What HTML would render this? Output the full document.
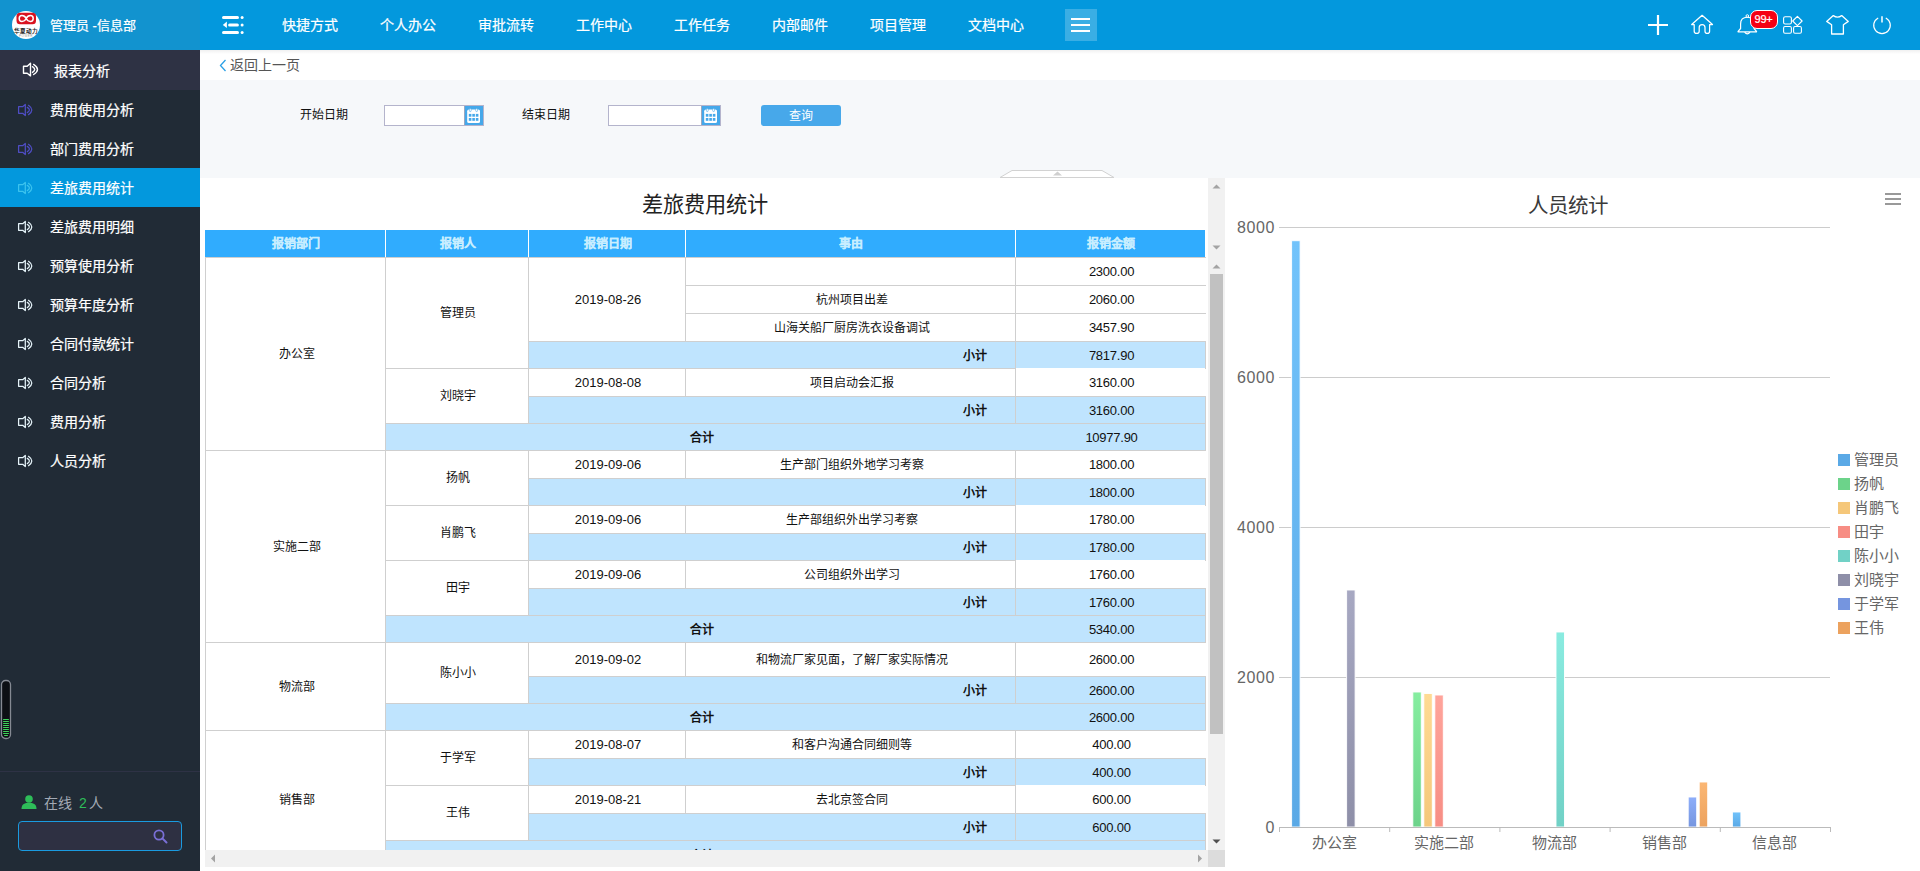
<!DOCTYPE html><html lang="zh-CN"><head><meta charset="utf-8"><title>差旅费用统计</title><style>
*{box-sizing:border-box;margin:0;padding:0}
html,body{width:1920px;height:871px;overflow:hidden;background:#fff}
body{position:relative;font-family:"Liberation Sans",sans-serif;color:#000}
.a{position:absolute}
.ws{-webkit-text-stroke:.22px #fff}
.mi{position:absolute;left:0;width:200px;height:39px;color:#fff;font-size:14px;line-height:39px;white-space:nowrap}
.mi span{position:absolute;left:50px;top:0}
.mi svg{position:absolute;left:18px;top:13px}
.nav{position:absolute;top:0;height:50px;line-height:50px;color:#fff;font-size:14px;white-space:nowrap}
.c{position:absolute;text-align:center;white-space:nowrap;font-size:12px;color:#111}
.n{font-size:13px}
.hl{position:absolute;height:1px;background:#cfcfcf}
.vl{position:absolute;width:1px;background:#cfcfcf}
.bl{position:absolute;background:#c2e5fc}
.th{position:absolute;top:230px;height:27px;line-height:27px;background:#30acfe;color:#c8eeff;font-weight:bold;font-size:12px;text-align:center;-webkit-text-stroke:.2px #c8eeff;padding-top:1px}
.lg{position:absolute;left:1838px;width:12px;height:12px}
.lt{position:absolute;left:1854px;font-size:15px;color:#666;line-height:15px;white-space:nowrap}
</style></head><body>
<div class="a" style="left:0;top:0;width:200px;height:871px;background:#212b36"></div>
<div class="a" style="left:0;top:0;width:200px;height:50px;background:#1293cf"></div>
<svg class="a" style="left:12px;top:11px" width="28" height="28" viewBox="0 0 28 28">
<circle cx="14" cy="14" r="14" fill="#fff"/>
<rect x="4.5" y="1.8" width="19.5" height="11.5" rx="3.5" fill="#d9121f"/>
<path d="M14.2 7.5 C12.2 3.6 7.2 3.6 7.2 7.5 C7.2 11.4 12.2 11.4 14.2 7.5 C16.2 3.6 21.2 3.6 21.2 7.5 C21.2 11.4 16.2 11.4 14.2 7.5Z" fill="none" stroke="#fff" stroke-width="1.5"/>
<text x="14" y="21.5" text-anchor="middle" font-size="5.6" font-weight="bold" fill="#222" font-family="Liberation Sans">华夏动力</text>
<text x="14" y="26" text-anchor="middle" font-size="3" fill="#999" font-family="Liberation Sans" letter-spacing=".5">POWER</text>
</svg>
<div class="a ws" style="left:50px;top:17px;font-size:13px;line-height:18px;color:#fff;white-space:nowrap">管理员 -信息部</div>
<div class="a" style="left:0;top:50px;width:200px;height:40px;background:#2e3244"></div>
<svg class="a" style="left:22px;top:62px" width="20" height="16" viewBox="0 0 20 16"><path d="M1.5 4.2 H5.2 L8.5 1.2 V13.9 L5.2 11.3 H1.5 Z" fill="none" stroke="#ffffff" stroke-width="1.4" stroke-linejoin="round"/><path d="M10.5 4.7 Q14.9 7.55 10.5 10.4" fill="none" stroke="#ffffff" stroke-width="1.4" stroke-linecap="round"/><path d="M11.6 2.4 Q19.4 7.45 11.6 12.5" fill="none" stroke="#ffffff" stroke-width="1.4" stroke-linecap="round"/></svg>
<div class="a ws" style="left:54px;top:62px;font-size:14px;line-height:18px;color:#fff;white-space:nowrap">报表分析</div>
<svg class="a" style="left:17px;top:103px" width="20" height="16" viewBox="0 0 20 16"><path d="M1.6 3.7 H5.7 L8.3 1.4 V12.6 L5.7 10.3 H1.6 Z" fill="none" stroke="#4f4dc4" stroke-width="1.25" stroke-linejoin="round"/><path d="M10.3 4.4 Q14.5 7 10.3 9.6" fill="none" stroke="#4f4dc4" stroke-width="1.25" stroke-linecap="round"/><path d="M11.5 2.3 Q18.1 7 11.5 11.7" fill="none" stroke="#4f4dc4" stroke-width="1.25" stroke-linecap="round"/></svg>
<div style="position:absolute;left:50px;top:101px;font-size:14px;line-height:18px;color:#fff;white-space:nowrap" class="a ws">费用使用分析</div>
<svg class="a" style="left:17px;top:142px" width="20" height="16" viewBox="0 0 20 16"><path d="M1.6 3.7 H5.7 L8.3 1.4 V12.6 L5.7 10.3 H1.6 Z" fill="none" stroke="#4f4dc4" stroke-width="1.25" stroke-linejoin="round"/><path d="M10.3 4.4 Q14.5 7 10.3 9.6" fill="none" stroke="#4f4dc4" stroke-width="1.25" stroke-linecap="round"/><path d="M11.5 2.3 Q18.1 7 11.5 11.7" fill="none" stroke="#4f4dc4" stroke-width="1.25" stroke-linecap="round"/></svg>
<div style="position:absolute;left:50px;top:140px;font-size:14px;line-height:18px;color:#fff;white-space:nowrap" class="a ws">部门费用分析</div>
<div class="a" style="left:0;top:168px;width:200px;height:39px;background:#0398dd"></div>
<svg class="a" style="left:17px;top:181px" width="20" height="16" viewBox="0 0 20 16"><path d="M1.6 3.7 H5.7 L8.3 1.4 V12.6 L5.7 10.3 H1.6 Z" fill="none" stroke="#3cc3ee" stroke-width="1.25" stroke-linejoin="round"/><path d="M10.3 4.4 Q14.5 7 10.3 9.6" fill="none" stroke="#3cc3ee" stroke-width="1.25" stroke-linecap="round"/><path d="M11.5 2.3 Q18.1 7 11.5 11.7" fill="none" stroke="#3cc3ee" stroke-width="1.25" stroke-linecap="round"/></svg>
<div style="position:absolute;left:50px;top:179px;font-size:14px;line-height:18px;color:#fff;white-space:nowrap" class="a ws">差旅费用统计</div>
<svg class="a" style="left:17px;top:220px" width="20" height="16" viewBox="0 0 20 16"><path d="M1.6 3.7 H5.7 L8.3 1.4 V12.6 L5.7 10.3 H1.6 Z" fill="none" stroke="#e6f4fa" stroke-width="1.25" stroke-linejoin="round"/><path d="M10.3 4.4 Q14.5 7 10.3 9.6" fill="none" stroke="#e6f4fa" stroke-width="1.25" stroke-linecap="round"/><path d="M11.5 2.3 Q18.1 7 11.5 11.7" fill="none" stroke="#e6f4fa" stroke-width="1.25" stroke-linecap="round"/></svg>
<div style="position:absolute;left:50px;top:218px;font-size:14px;line-height:18px;color:#fff;white-space:nowrap" class="a ws">差旅费用明细</div>
<svg class="a" style="left:17px;top:259px" width="20" height="16" viewBox="0 0 20 16"><path d="M1.6 3.7 H5.7 L8.3 1.4 V12.6 L5.7 10.3 H1.6 Z" fill="none" stroke="#e6f4fa" stroke-width="1.25" stroke-linejoin="round"/><path d="M10.3 4.4 Q14.5 7 10.3 9.6" fill="none" stroke="#e6f4fa" stroke-width="1.25" stroke-linecap="round"/><path d="M11.5 2.3 Q18.1 7 11.5 11.7" fill="none" stroke="#e6f4fa" stroke-width="1.25" stroke-linecap="round"/></svg>
<div style="position:absolute;left:50px;top:257px;font-size:14px;line-height:18px;color:#fff;white-space:nowrap" class="a ws">预算使用分析</div>
<svg class="a" style="left:17px;top:298px" width="20" height="16" viewBox="0 0 20 16"><path d="M1.6 3.7 H5.7 L8.3 1.4 V12.6 L5.7 10.3 H1.6 Z" fill="none" stroke="#e6f4fa" stroke-width="1.25" stroke-linejoin="round"/><path d="M10.3 4.4 Q14.5 7 10.3 9.6" fill="none" stroke="#e6f4fa" stroke-width="1.25" stroke-linecap="round"/><path d="M11.5 2.3 Q18.1 7 11.5 11.7" fill="none" stroke="#e6f4fa" stroke-width="1.25" stroke-linecap="round"/></svg>
<div style="position:absolute;left:50px;top:296px;font-size:14px;line-height:18px;color:#fff;white-space:nowrap" class="a ws">预算年度分析</div>
<svg class="a" style="left:17px;top:337px" width="20" height="16" viewBox="0 0 20 16"><path d="M1.6 3.7 H5.7 L8.3 1.4 V12.6 L5.7 10.3 H1.6 Z" fill="none" stroke="#e6f4fa" stroke-width="1.25" stroke-linejoin="round"/><path d="M10.3 4.4 Q14.5 7 10.3 9.6" fill="none" stroke="#e6f4fa" stroke-width="1.25" stroke-linecap="round"/><path d="M11.5 2.3 Q18.1 7 11.5 11.7" fill="none" stroke="#e6f4fa" stroke-width="1.25" stroke-linecap="round"/></svg>
<div style="position:absolute;left:50px;top:335px;font-size:14px;line-height:18px;color:#fff;white-space:nowrap" class="a ws">合同付款统计</div>
<svg class="a" style="left:17px;top:376px" width="20" height="16" viewBox="0 0 20 16"><path d="M1.6 3.7 H5.7 L8.3 1.4 V12.6 L5.7 10.3 H1.6 Z" fill="none" stroke="#e6f4fa" stroke-width="1.25" stroke-linejoin="round"/><path d="M10.3 4.4 Q14.5 7 10.3 9.6" fill="none" stroke="#e6f4fa" stroke-width="1.25" stroke-linecap="round"/><path d="M11.5 2.3 Q18.1 7 11.5 11.7" fill="none" stroke="#e6f4fa" stroke-width="1.25" stroke-linecap="round"/></svg>
<div style="position:absolute;left:50px;top:374px;font-size:14px;line-height:18px;color:#fff;white-space:nowrap" class="a ws">合同分析</div>
<svg class="a" style="left:17px;top:415px" width="20" height="16" viewBox="0 0 20 16"><path d="M1.6 3.7 H5.7 L8.3 1.4 V12.6 L5.7 10.3 H1.6 Z" fill="none" stroke="#e6f4fa" stroke-width="1.25" stroke-linejoin="round"/><path d="M10.3 4.4 Q14.5 7 10.3 9.6" fill="none" stroke="#e6f4fa" stroke-width="1.25" stroke-linecap="round"/><path d="M11.5 2.3 Q18.1 7 11.5 11.7" fill="none" stroke="#e6f4fa" stroke-width="1.25" stroke-linecap="round"/></svg>
<div style="position:absolute;left:50px;top:413px;font-size:14px;line-height:18px;color:#fff;white-space:nowrap" class="a ws">费用分析</div>
<svg class="a" style="left:17px;top:454px" width="20" height="16" viewBox="0 0 20 16"><path d="M1.6 3.7 H5.7 L8.3 1.4 V12.6 L5.7 10.3 H1.6 Z" fill="none" stroke="#e6f4fa" stroke-width="1.25" stroke-linejoin="round"/><path d="M10.3 4.4 Q14.5 7 10.3 9.6" fill="none" stroke="#e6f4fa" stroke-width="1.25" stroke-linecap="round"/><path d="M11.5 2.3 Q18.1 7 11.5 11.7" fill="none" stroke="#e6f4fa" stroke-width="1.25" stroke-linecap="round"/></svg>
<div style="position:absolute;left:50px;top:452px;font-size:14px;line-height:18px;color:#fff;white-space:nowrap" class="a ws">人员分析</div>
<svg class="a" style="left:0;top:679px" width="13" height="61" viewBox="0 0 13 61">
<rect x="1.5" y="1.5" width="9" height="58" rx="4" fill="#0c0f14" stroke="#858a93" stroke-width="1.3"/>
<rect x="3" y="40" width="6" height="1.1" rx=".5" fill="#3fd45a"/><rect x="3" y="42" width="6" height="1.1" rx=".5" fill="#3fd45a"/><rect x="3" y="44" width="6" height="1.1" rx=".5" fill="#3fd45a"/><rect x="3" y="46" width="6" height="1.1" rx=".5" fill="#3fd45a"/><rect x="3" y="48" width="6" height="1.1" rx=".5" fill="#3fd45a"/><rect x="3" y="50" width="6" height="1.1" rx=".5" fill="#3fd45a"/><rect x="3" y="52" width="6" height="1.1" rx=".5" fill="#3fd45a"/><rect x="3" y="54" width="6" height="1.1" rx=".5" fill="#3fd45a"/><rect x="4" y="56" width="4" height="1.1" rx=".5" fill="#3fd45a"/></svg>
<div class="a" style="left:0;top:771px;width:200px;height:1px;background:#2e3245"></div>
<svg class="a" style="left:21px;top:795px" width="16" height="14" viewBox="0 0 16 14"><circle cx="8" cy="4" r="3.8" fill="#2ebd59"/><path d="M0.5 14 C0.5 9 4 7.8 8 7.8 C12 7.8 15.5 9 15.5 14Z" fill="#2ebd59"/></svg>
<div class="a" style="left:44px;top:794px;font-size:14px;line-height:18px;color:#a3aab5;white-space:nowrap">在线<span style="color:#2ebd59;margin-left:7px;margin-right:2px">2</span>人</div>
<div class="a" style="left:18px;top:821px;width:164px;height:30px;border:1px solid #1a9be0;border-radius:4px;background:#2e3042"></div>
<svg class="a" style="left:153px;top:829px" width="15" height="15" viewBox="0 0 15 15"><circle cx="6" cy="6" r="4.6" fill="none" stroke="#7a6fd6" stroke-width="1.8"/><path d="M9.4 9.4 L13.5 13.5" stroke="#7a6fd6" stroke-width="2" stroke-linecap="round"/></svg>
<div class="a" style="left:200px;top:0;width:1720px;height:50px;background:#0398dd"></div>
<svg class="a" style="left:221px;top:15px" width="25" height="20" viewBox="0 0 25 20">
<rect x="1" y="1" width="17" height="3" rx="1.5" fill="#fff"/><circle cx="21.1" cy="2.5" r="1.5" fill="#fff"/>
<rect x="7.1" y="8.5" width="10.8" height="3" rx="1.5" fill="#fff"/><circle cx="21.1" cy="10" r="1.5" fill="#fff"/><path d="M1.8 9.9 L5.9 6.6 V13.1Z" fill="#fff"/>
<rect x="1" y="16" width="17" height="3" rx="1.5" fill="#fff"/><circle cx="21.1" cy="17.5" r="1.5" fill="#fff"/>
</svg>
<div style="position:absolute;left:282px;top:16px;font-size:14px;line-height:18px;color:#fff;white-space:nowrap" class="a ws">快捷方式</div>
<div style="position:absolute;left:380px;top:16px;font-size:14px;line-height:18px;color:#fff;white-space:nowrap" class="a ws">个人办公</div>
<div style="position:absolute;left:478px;top:16px;font-size:14px;line-height:18px;color:#fff;white-space:nowrap" class="a ws">审批流转</div>
<div style="position:absolute;left:576px;top:16px;font-size:14px;line-height:18px;color:#fff;white-space:nowrap" class="a ws">工作中心</div>
<div style="position:absolute;left:674px;top:16px;font-size:14px;line-height:18px;color:#fff;white-space:nowrap" class="a ws">工作任务</div>
<div style="position:absolute;left:772px;top:16px;font-size:14px;line-height:18px;color:#fff;white-space:nowrap" class="a ws">内部邮件</div>
<div style="position:absolute;left:870px;top:16px;font-size:14px;line-height:18px;color:#fff;white-space:nowrap" class="a ws">项目管理</div>
<div style="position:absolute;left:968px;top:16px;font-size:14px;line-height:18px;color:#fff;white-space:nowrap" class="a ws">文档中心</div>
<div class="a" style="left:1065px;top:9px;width:32px;height:32px;background:rgba(255,255,255,.22)"></div>
<div class="a" style="left:1071px;top:18px;width:19px;height:2px;background:#fff"></div>
<div class="a" style="left:1071px;top:24px;width:19px;height:2px;background:#fff"></div>
<div class="a" style="left:1071px;top:30px;width:19px;height:2px;background:#fff"></div>
<svg class="a" style="left:1646px;top:13px" width="24" height="24" viewBox="0 0 24 24"><path d="M12 2 V22 M2 12 H22" stroke="#fff" stroke-width="2.2"/></svg>
<svg class="a" style="left:1690px;top:14px" width="24" height="22" viewBox="0 0 24 22"><path d="M12.1 1.3 L1.7 10.5 H4.2 V17.2 Q4.2 19.4 6.7 19.4 Q9.2 19.4 9.2 17.2 V13.6 A2.9 2.9 0 0 1 15 13.6 V17.2 Q15 19.4 17.3 19.4 Q19.6 19.4 19.6 17.2 V10.5 H22.5 Z" fill="none" stroke="#fff" stroke-width="1.25" stroke-linejoin="round"/></svg>
<svg class="a" style="left:1736px;top:13px" width="24" height="24" viewBox="0 0 24 24"><path d="M4.6 15.5 V11 Q4.6 4.25 11.3 4.25 Q18 4.25 18 11 V15.5 L20.5 18.3 Q20.8 18.9 20 18.9 H2.6 Q1.8 18.9 2.1 18.3 Z" fill="none" stroke="#fff" stroke-width="1.2" stroke-linejoin="round"/><path d="M8.6 19.2 Q11.3 22.6 14 19.2" fill="none" stroke="#fff" stroke-width="1.2"/><circle cx="11.3" cy="3" r="1.3" fill="none" stroke="#fff" stroke-width="1"/></svg>
<div class="a" style="left:1749.5px;top:10px;width:28px;height:19px;border-radius:7px;background:#f50014;border:1.7px solid #fff;color:#fff;font-size:11px;line-height:17px;text-align:center;letter-spacing:-.2px;-webkit-text-stroke:.2px #fff">99+</div>
<svg class="a" style="left:1782px;top:15px" width="22" height="21" viewBox="0 0 22 21"><rect x="1.6" y="1.7" width="7.8" height="7.3" rx="1.6" fill="none" stroke="#fff" stroke-width="1.1"/><path d="M15.4 1.3 L20.1 6 L15.4 10.7 L10.7 6 Z" fill="none" stroke="#fff" stroke-width="1.15" stroke-linejoin="round"/><rect x="1.6" y="11.5" width="7.8" height="6.7" rx="1.4" fill="none" stroke="#fff" stroke-width="1.1"/><rect x="11.6" y="11.5" width="7.8" height="6.7" rx="1.4" fill="none" stroke="#fff" stroke-width="1.1"/></svg>
<svg class="a" style="left:1825px;top:14px" width="25" height="22" viewBox="0 0 25 22"><path d="M8.3 1.6 Q12.5 4.6 16.7 1.6 L23.3 7.4 L18.4 10.8 V20 H6.6 V10.8 L1.7 7.4 Z" fill="none" stroke="#fff" stroke-width="1.3" stroke-linejoin="round"/></svg>
<svg class="a" style="left:1871px;top:14px" width="22" height="22" viewBox="0 0 22 22"><path d="M6.8 4.2 A8.3 8.3 0 1 0 15.2 4.2" fill="none" stroke="#fff" stroke-width="1.2" stroke-linecap="round"/><path d="M11 2.2 V8.4" stroke="#fff" stroke-width="1.5"/></svg>
<svg class="a" style="left:219px;top:59px" width="8" height="13" viewBox="0 0 8 13"><path d="M6.5 1 L1.5 6.5 L6.5 12" fill="none" stroke="#2aa0e6" stroke-width="1.3"/></svg>
<div class="a" style="left:230px;top:57px;font-size:14px;line-height:16px;color:#555;white-space:nowrap">返回上一页</div>
<div class="a" style="left:200px;top:80px;width:1720px;height:98px;background:#f6f8fa"></div>
<div class="a" style="left:300px;top:107px;font-size:12px;line-height:16px;color:#111;white-space:nowrap">开始日期</div>
<div class="a" style="left:522px;top:107px;font-size:12px;line-height:16px;color:#111;white-space:nowrap">结束日期</div>
<div class="a" style="left:384px;top:105px;width:100px;height:21px;border:1px solid #b4b4cc;background:#fff"></div><div class="a" style="left:464px;top:106px;width:19px;height:19px;background:#45a8ea;border-left:1px solid #9aa7c0"></div><svg class="a" style="left:466px;top:108px" width="16" height="16" viewBox="0 0 16 16"><rect x="1.2" y="1.6" width="12.8" height="13.4" rx="1.6" fill="#fff"/><rect x="2.8" y="5.9" width="2.6" height="2.8" fill="#45a8ea"/><rect x="6.3" y="5.9" width="2.6" height="2.8" fill="#45a8ea"/><rect x="9.8" y="5.9" width="2.6" height="2.8" fill="#45a8ea"/><rect x="2.8" y="10" width="2.6" height="2.8" fill="#45a8ea"/><rect x="6.3" y="10" width="2.6" height="2.8" fill="#45a8ea"/><rect x="9.8" y="10" width="2.6" height="2.8" fill="#45a8ea"/><rect x="3.4" y="0.6" width="1.8" height="3" rx=".9" fill="#fff" stroke="#45a8ea" stroke-width=".6"/><rect x="9.7" y="0.6" width="1.8" height="3" rx=".9" fill="#fff" stroke="#45a8ea" stroke-width=".6"/></svg>
<div class="a" style="left:608px;top:105px;width:113px;height:21px;border:1px solid #b4b4cc;background:#fff"></div><div class="a" style="left:701px;top:106px;width:19px;height:19px;background:#45a8ea;border-left:1px solid #9aa7c0"></div><svg class="a" style="left:703px;top:108px" width="16" height="16" viewBox="0 0 16 16"><rect x="1.2" y="1.6" width="12.8" height="13.4" rx="1.6" fill="#fff"/><rect x="2.8" y="5.9" width="2.6" height="2.8" fill="#45a8ea"/><rect x="6.3" y="5.9" width="2.6" height="2.8" fill="#45a8ea"/><rect x="9.8" y="5.9" width="2.6" height="2.8" fill="#45a8ea"/><rect x="2.8" y="10" width="2.6" height="2.8" fill="#45a8ea"/><rect x="6.3" y="10" width="2.6" height="2.8" fill="#45a8ea"/><rect x="9.8" y="10" width="2.6" height="2.8" fill="#45a8ea"/><rect x="3.4" y="0.6" width="1.8" height="3" rx=".9" fill="#fff" stroke="#45a8ea" stroke-width=".6"/><rect x="9.7" y="0.6" width="1.8" height="3" rx=".9" fill="#fff" stroke="#45a8ea" stroke-width=".6"/></svg>
<div class="a" style="left:761px;top:105px;width:80px;height:21px;border-radius:3px;background:#47a8ea;color:#fff;font-size:12px;line-height:23px;text-align:center">查询</div>
<svg class="a" style="left:999px;top:169px" width="117" height="10" viewBox="0 0 117 10"><path d="M1 8.5 L13 1.5 L103 1.5 L115 8.5 Z" fill="#fff" stroke="#d2d2d2" stroke-width="1"/><path d="M54 6.5 L58.5 2.5 L63 6.5Z" fill="#cfcfcf"/></svg>
<div class="a" style="left:200px;top:178px;width:1008px;height:693px;background:#fff"></div>
<div class="a" style="left:642px;top:193px;font-size:21.2px;line-height:24px;color:#222;white-space:nowrap">差旅费用统计</div>
<div class="th" style="left:205px;width:180px;padding-left:1.5px">报销部门</div>
<div class="th" style="left:386px;width:142px;padding-left:1.5px">报销人</div>
<div class="th" style="left:529px;width:156px;padding-left:1.5px">报销日期</div>
<div class="th" style="left:686px;width:329px;padding-left:1.5px">事由</div>
<div class="th" style="left:1016px;width:189px;padding-left:1.5px">报销金额</div>
<div class="hl" style="left:205px;top:257px;width:181px"></div><div class="vl" style="left:205px;top:257px;height:194px"></div><div class="c" style="left:206.5px;width:180px;top:345.0px;line-height:18px;font-size:12px;font-weight:normal;letter-spacing:0px">办公室</div>
<div class="hl" style="left:205px;top:450px;width:181px"></div><div class="vl" style="left:205px;top:450px;height:193px"></div><div class="c" style="left:206.5px;width:180px;top:537.5px;line-height:18px;font-size:12px;font-weight:normal;letter-spacing:0px">实施二部</div>
<div class="hl" style="left:205px;top:642px;width:181px"></div><div class="vl" style="left:205px;top:642px;height:89px"></div><div class="c" style="left:206.5px;width:180px;top:677.5px;line-height:18px;font-size:12px;font-weight:normal;letter-spacing:0px">物流部</div>
<div class="hl" style="left:205px;top:730px;width:181px"></div><div class="vl" style="left:205px;top:730px;height:139px"></div><div class="c" style="left:206.5px;width:180px;top:790.5px;line-height:18px;font-size:12px;font-weight:normal;letter-spacing:0px">销售部</div>
<div class="hl" style="left:385px;top:257px;width:144px"></div><div class="vl" style="left:385px;top:257px;height:112px"></div><div class="c" style="left:386.5px;width:143px;top:304.0px;line-height:18px;font-size:12px;font-weight:normal;letter-spacing:0px">管理员</div>
<div class="hl" style="left:385px;top:368px;width:144px"></div><div class="vl" style="left:385px;top:368px;height:56px"></div><div class="c" style="left:386.5px;width:143px;top:387.0px;line-height:18px;font-size:12px;font-weight:normal;letter-spacing:0px">刘晓宇</div>
<div class="hl" style="left:385px;top:450px;width:144px"></div><div class="vl" style="left:385px;top:450px;height:56px"></div><div class="c" style="left:386.5px;width:143px;top:469.0px;line-height:18px;font-size:12px;font-weight:normal;letter-spacing:0px">扬帆</div>
<div class="hl" style="left:385px;top:505px;width:144px"></div><div class="vl" style="left:385px;top:505px;height:56px"></div><div class="c" style="left:386.5px;width:143px;top:524.0px;line-height:18px;font-size:12px;font-weight:normal;letter-spacing:0px">肖鹏飞</div>
<div class="hl" style="left:385px;top:560px;width:144px"></div><div class="vl" style="left:385px;top:560px;height:56px"></div><div class="c" style="left:386.5px;width:143px;top:579.0px;line-height:18px;font-size:12px;font-weight:normal;letter-spacing:0px">田宇</div>
<div class="hl" style="left:385px;top:642px;width:144px"></div><div class="vl" style="left:385px;top:642px;height:62px"></div><div class="c" style="left:386.5px;width:143px;top:664.0px;line-height:18px;font-size:12px;font-weight:normal;letter-spacing:0px">陈小小</div>
<div class="hl" style="left:385px;top:730px;width:144px"></div><div class="vl" style="left:385px;top:730px;height:56px"></div><div class="c" style="left:386.5px;width:143px;top:749.0px;line-height:18px;font-size:12px;font-weight:normal;letter-spacing:0px">于学军</div>
<div class="hl" style="left:385px;top:785px;width:144px"></div><div class="vl" style="left:385px;top:785px;height:56px"></div><div class="c" style="left:386.5px;width:143px;top:804.0px;line-height:18px;font-size:12px;font-weight:normal;letter-spacing:0px">王伟</div>
<div class="hl" style="left:528px;top:257px;width:158px"></div><div class="vl" style="left:528px;top:257px;height:85px"></div><div class="c" style="left:529.5px;width:157px;top:290.5px;line-height:18px;font-size:13px;font-weight:normal;letter-spacing:0px">2019-08-26</div>
<div class="hl" style="left:528px;top:368px;width:158px"></div><div class="vl" style="left:528px;top:368px;height:29px"></div><div class="c" style="left:529.5px;width:157px;top:373.5px;line-height:18px;font-size:13px;font-weight:normal;letter-spacing:0px">2019-08-08</div>
<div class="hl" style="left:528px;top:450px;width:158px"></div><div class="vl" style="left:528px;top:450px;height:29px"></div><div class="c" style="left:529.5px;width:157px;top:455.5px;line-height:18px;font-size:13px;font-weight:normal;letter-spacing:0px">2019-09-06</div>
<div class="hl" style="left:528px;top:505px;width:158px"></div><div class="vl" style="left:528px;top:505px;height:29px"></div><div class="c" style="left:529.5px;width:157px;top:510.5px;line-height:18px;font-size:13px;font-weight:normal;letter-spacing:0px">2019-09-06</div>
<div class="hl" style="left:528px;top:560px;width:158px"></div><div class="vl" style="left:528px;top:560px;height:29px"></div><div class="c" style="left:529.5px;width:157px;top:565.5px;line-height:18px;font-size:13px;font-weight:normal;letter-spacing:0px">2019-09-06</div>
<div class="hl" style="left:528px;top:642px;width:158px"></div><div class="vl" style="left:528px;top:642px;height:35px"></div><div class="c" style="left:529.5px;width:157px;top:650.5px;line-height:18px;font-size:13px;font-weight:normal;letter-spacing:0px">2019-09-02</div>
<div class="hl" style="left:528px;top:730px;width:158px"></div><div class="vl" style="left:528px;top:730px;height:29px"></div><div class="c" style="left:529.5px;width:157px;top:735.5px;line-height:18px;font-size:13px;font-weight:normal;letter-spacing:0px">2019-08-07</div>
<div class="hl" style="left:528px;top:785px;width:158px"></div><div class="vl" style="left:528px;top:785px;height:29px"></div><div class="c" style="left:529.5px;width:157px;top:790.5px;line-height:18px;font-size:13px;font-weight:normal;letter-spacing:0px">2019-08-21</div>
<div class="hl" style="left:685px;top:257px;width:331px"></div><div class="vl" style="left:685px;top:257px;height:29px"></div>
<div class="hl" style="left:1015px;top:257px;width:191px"></div><div class="vl" style="left:1015px;top:257px;height:29px"></div><div class="c" style="left:1016.5px;width:190px;top:262.5px;line-height:18px;font-size:13px;font-weight:normal;letter-spacing:-0.25px">2300.00</div>
<div class="hl" style="left:685px;top:285px;width:331px"></div><div class="vl" style="left:685px;top:285px;height:29px"></div><div class="c" style="left:686.5px;width:330px;top:290.5px;line-height:18px;font-size:12px;font-weight:normal;letter-spacing:0px">杭州项目出差</div>
<div class="hl" style="left:1015px;top:285px;width:191px"></div><div class="vl" style="left:1015px;top:285px;height:29px"></div><div class="c" style="left:1016.5px;width:190px;top:290.5px;line-height:18px;font-size:13px;font-weight:normal;letter-spacing:-0.25px">2060.00</div>
<div class="hl" style="left:685px;top:313px;width:331px"></div><div class="vl" style="left:685px;top:313px;height:29px"></div><div class="c" style="left:686.5px;width:330px;top:318.5px;line-height:18px;font-size:12px;font-weight:normal;letter-spacing:0px">山海关船厂厨房洗衣设备调试</div>
<div class="hl" style="left:1015px;top:313px;width:191px"></div><div class="vl" style="left:1015px;top:313px;height:29px"></div><div class="c" style="left:1016.5px;width:190px;top:318.5px;line-height:18px;font-size:13px;font-weight:normal;letter-spacing:-0.25px">3457.90</div>
<div class="hl" style="left:685px;top:368px;width:331px"></div><div class="vl" style="left:685px;top:368px;height:29px"></div><div class="c" style="left:686.5px;width:330px;top:373.5px;line-height:18px;font-size:12px;font-weight:normal;letter-spacing:0px">项目启动会汇报</div>
<div class="hl" style="left:1015px;top:368px;width:191px"></div><div class="vl" style="left:1015px;top:368px;height:29px"></div><div class="c" style="left:1016.5px;width:190px;top:373.5px;line-height:18px;font-size:13px;font-weight:normal;letter-spacing:-0.25px">3160.00</div>
<div class="hl" style="left:685px;top:450px;width:331px"></div><div class="vl" style="left:685px;top:450px;height:29px"></div><div class="c" style="left:686.5px;width:330px;top:455.5px;line-height:18px;font-size:12px;font-weight:normal;letter-spacing:0px">生产部门组织外地学习考察</div>
<div class="hl" style="left:1015px;top:450px;width:191px"></div><div class="vl" style="left:1015px;top:450px;height:29px"></div><div class="c" style="left:1016.5px;width:190px;top:455.5px;line-height:18px;font-size:13px;font-weight:normal;letter-spacing:-0.25px">1800.00</div>
<div class="hl" style="left:685px;top:505px;width:331px"></div><div class="vl" style="left:685px;top:505px;height:29px"></div><div class="c" style="left:686.5px;width:330px;top:510.5px;line-height:18px;font-size:12px;font-weight:normal;letter-spacing:0px">生产部组织外出学习考察</div>
<div class="hl" style="left:1015px;top:505px;width:191px"></div><div class="vl" style="left:1015px;top:505px;height:29px"></div><div class="c" style="left:1016.5px;width:190px;top:510.5px;line-height:18px;font-size:13px;font-weight:normal;letter-spacing:-0.25px">1780.00</div>
<div class="hl" style="left:685px;top:560px;width:331px"></div><div class="vl" style="left:685px;top:560px;height:29px"></div><div class="c" style="left:686.5px;width:330px;top:565.5px;line-height:18px;font-size:12px;font-weight:normal;letter-spacing:0px">公司组织外出学习</div>
<div class="hl" style="left:1015px;top:560px;width:191px"></div><div class="vl" style="left:1015px;top:560px;height:29px"></div><div class="c" style="left:1016.5px;width:190px;top:565.5px;line-height:18px;font-size:13px;font-weight:normal;letter-spacing:-0.25px">1760.00</div>
<div class="hl" style="left:685px;top:642px;width:331px"></div><div class="vl" style="left:685px;top:642px;height:35px"></div><div class="c" style="left:686.5px;width:330px;top:650.5px;line-height:18px;font-size:12px;font-weight:normal;letter-spacing:0px">和物流厂家见面，了解厂家实际情况</div>
<div class="hl" style="left:1015px;top:642px;width:191px"></div><div class="vl" style="left:1015px;top:642px;height:35px"></div><div class="c" style="left:1016.5px;width:190px;top:650.5px;line-height:18px;font-size:13px;font-weight:normal;letter-spacing:-0.25px">2600.00</div>
<div class="hl" style="left:685px;top:730px;width:331px"></div><div class="vl" style="left:685px;top:730px;height:29px"></div><div class="c" style="left:686.5px;width:330px;top:735.5px;line-height:18px;font-size:12px;font-weight:normal;letter-spacing:0px">和客户沟通合同细则等</div>
<div class="hl" style="left:1015px;top:730px;width:191px"></div><div class="vl" style="left:1015px;top:730px;height:29px"></div><div class="c" style="left:1016.5px;width:190px;top:735.5px;line-height:18px;font-size:13px;font-weight:normal;letter-spacing:-0.25px">400.00</div>
<div class="hl" style="left:685px;top:785px;width:331px"></div><div class="vl" style="left:685px;top:785px;height:29px"></div><div class="c" style="left:686.5px;width:330px;top:790.5px;line-height:18px;font-size:12px;font-weight:normal;letter-spacing:0px">去北京签合同</div>
<div class="hl" style="left:1015px;top:785px;width:191px"></div><div class="vl" style="left:1015px;top:785px;height:29px"></div><div class="c" style="left:1016.5px;width:190px;top:790.5px;line-height:18px;font-size:13px;font-weight:normal;letter-spacing:-0.25px">600.00</div>
<div class="a" style="left:528px;top:341px;width:487px;height:27px;background:#bfe4fe"></div><div class="hl" style="left:528px;top:341px;width:488px"></div><div class="vl" style="left:528px;top:341px;height:28px"></div><div class="c" style="left:529.5px;width:457px;top:346.5px;line-height:18px;font-size:12px;font-weight:bold;text-align:right">小计</div>
<div class="a" style="left:1015px;top:341px;width:190px;height:27px;background:#bfe4fe"></div><div class="hl" style="left:1015px;top:341px;width:191px"></div><div class="vl" style="left:1015px;top:341px;height:28px"></div><div class="vl" style="left:1205px;top:341px;height:28px"></div><div class="c" style="left:1016.5px;width:190px;top:346.5px;line-height:18px;font-size:13px;font-weight:normal;letter-spacing:-0.25px">7817.90</div>
<div class="a" style="left:528px;top:396px;width:487px;height:27px;background:#bfe4fe"></div><div class="hl" style="left:528px;top:396px;width:488px"></div><div class="vl" style="left:528px;top:396px;height:28px"></div><div class="c" style="left:529.5px;width:457px;top:401.5px;line-height:18px;font-size:12px;font-weight:bold;text-align:right">小计</div>
<div class="a" style="left:1015px;top:396px;width:190px;height:27px;background:#bfe4fe"></div><div class="hl" style="left:1015px;top:396px;width:191px"></div><div class="vl" style="left:1015px;top:396px;height:28px"></div><div class="vl" style="left:1205px;top:396px;height:28px"></div><div class="c" style="left:1016.5px;width:190px;top:401.5px;line-height:18px;font-size:13px;font-weight:normal;letter-spacing:-0.25px">3160.00</div>
<div class="a" style="left:528px;top:478px;width:487px;height:27px;background:#bfe4fe"></div><div class="hl" style="left:528px;top:478px;width:488px"></div><div class="vl" style="left:528px;top:478px;height:28px"></div><div class="c" style="left:529.5px;width:457px;top:483.5px;line-height:18px;font-size:12px;font-weight:bold;text-align:right">小计</div>
<div class="a" style="left:1015px;top:478px;width:190px;height:27px;background:#bfe4fe"></div><div class="hl" style="left:1015px;top:478px;width:191px"></div><div class="vl" style="left:1015px;top:478px;height:28px"></div><div class="vl" style="left:1205px;top:478px;height:28px"></div><div class="c" style="left:1016.5px;width:190px;top:483.5px;line-height:18px;font-size:13px;font-weight:normal;letter-spacing:-0.25px">1800.00</div>
<div class="a" style="left:528px;top:533px;width:487px;height:27px;background:#bfe4fe"></div><div class="hl" style="left:528px;top:533px;width:488px"></div><div class="vl" style="left:528px;top:533px;height:28px"></div><div class="c" style="left:529.5px;width:457px;top:538.5px;line-height:18px;font-size:12px;font-weight:bold;text-align:right">小计</div>
<div class="a" style="left:1015px;top:533px;width:190px;height:27px;background:#bfe4fe"></div><div class="hl" style="left:1015px;top:533px;width:191px"></div><div class="vl" style="left:1015px;top:533px;height:28px"></div><div class="vl" style="left:1205px;top:533px;height:28px"></div><div class="c" style="left:1016.5px;width:190px;top:538.5px;line-height:18px;font-size:13px;font-weight:normal;letter-spacing:-0.25px">1780.00</div>
<div class="a" style="left:528px;top:588px;width:487px;height:27px;background:#bfe4fe"></div><div class="hl" style="left:528px;top:588px;width:488px"></div><div class="vl" style="left:528px;top:588px;height:28px"></div><div class="c" style="left:529.5px;width:457px;top:593.5px;line-height:18px;font-size:12px;font-weight:bold;text-align:right">小计</div>
<div class="a" style="left:1015px;top:588px;width:190px;height:27px;background:#bfe4fe"></div><div class="hl" style="left:1015px;top:588px;width:191px"></div><div class="vl" style="left:1015px;top:588px;height:28px"></div><div class="vl" style="left:1205px;top:588px;height:28px"></div><div class="c" style="left:1016.5px;width:190px;top:593.5px;line-height:18px;font-size:13px;font-weight:normal;letter-spacing:-0.25px">1760.00</div>
<div class="a" style="left:528px;top:676px;width:487px;height:27px;background:#bfe4fe"></div><div class="hl" style="left:528px;top:676px;width:488px"></div><div class="vl" style="left:528px;top:676px;height:28px"></div><div class="c" style="left:529.5px;width:457px;top:681.5px;line-height:18px;font-size:12px;font-weight:bold;text-align:right">小计</div>
<div class="a" style="left:1015px;top:676px;width:190px;height:27px;background:#bfe4fe"></div><div class="hl" style="left:1015px;top:676px;width:191px"></div><div class="vl" style="left:1015px;top:676px;height:28px"></div><div class="vl" style="left:1205px;top:676px;height:28px"></div><div class="c" style="left:1016.5px;width:190px;top:681.5px;line-height:18px;font-size:13px;font-weight:normal;letter-spacing:-0.25px">2600.00</div>
<div class="a" style="left:528px;top:758px;width:487px;height:27px;background:#bfe4fe"></div><div class="hl" style="left:528px;top:758px;width:488px"></div><div class="vl" style="left:528px;top:758px;height:28px"></div><div class="c" style="left:529.5px;width:457px;top:763.5px;line-height:18px;font-size:12px;font-weight:bold;text-align:right">小计</div>
<div class="a" style="left:1015px;top:758px;width:190px;height:27px;background:#bfe4fe"></div><div class="hl" style="left:1015px;top:758px;width:191px"></div><div class="vl" style="left:1015px;top:758px;height:28px"></div><div class="vl" style="left:1205px;top:758px;height:28px"></div><div class="c" style="left:1016.5px;width:190px;top:763.5px;line-height:18px;font-size:13px;font-weight:normal;letter-spacing:-0.25px">400.00</div>
<div class="a" style="left:528px;top:813px;width:487px;height:27px;background:#bfe4fe"></div><div class="hl" style="left:528px;top:813px;width:488px"></div><div class="vl" style="left:528px;top:813px;height:28px"></div><div class="c" style="left:529.5px;width:457px;top:818.5px;line-height:18px;font-size:12px;font-weight:bold;text-align:right">小计</div>
<div class="a" style="left:1015px;top:813px;width:190px;height:27px;background:#bfe4fe"></div><div class="hl" style="left:1015px;top:813px;width:191px"></div><div class="vl" style="left:1015px;top:813px;height:28px"></div><div class="vl" style="left:1205px;top:813px;height:28px"></div><div class="c" style="left:1016.5px;width:190px;top:818.5px;line-height:18px;font-size:13px;font-weight:normal;letter-spacing:-0.25px">600.00</div>
<div class="a" style="left:385px;top:423px;width:820px;height:27px;background:#bfe4fe"></div>
<div class="hl" style="left:385px;top:423px;width:821px"></div>
<div class="vl" style="left:385px;top:423px;height:28px"></div>
<div class="vl" style="left:1205px;top:423px;height:28px"></div>
<div class="c" style="left:386.5px;width:630px;top:429.0px;line-height:18px;font-weight:bold">合计</div>
<div class="c n" style="left:1016.5px;width:190px;top:429.0px;line-height:18px;letter-spacing:-.25px">10977.90</div>
<div class="a" style="left:385px;top:615px;width:820px;height:27px;background:#bfe4fe"></div>
<div class="hl" style="left:385px;top:615px;width:821px"></div>
<div class="vl" style="left:385px;top:615px;height:28px"></div>
<div class="vl" style="left:1205px;top:615px;height:28px"></div>
<div class="c" style="left:386.5px;width:630px;top:621.0px;line-height:18px;font-weight:bold">合计</div>
<div class="c n" style="left:1016.5px;width:190px;top:621.0px;line-height:18px;letter-spacing:-.25px">5340.00</div>
<div class="a" style="left:385px;top:703px;width:820px;height:27px;background:#bfe4fe"></div>
<div class="hl" style="left:385px;top:703px;width:821px"></div>
<div class="vl" style="left:385px;top:703px;height:28px"></div>
<div class="vl" style="left:1205px;top:703px;height:28px"></div>
<div class="c" style="left:386.5px;width:630px;top:709.0px;line-height:18px;font-weight:bold">合计</div>
<div class="c n" style="left:1016.5px;width:190px;top:709.0px;line-height:18px;letter-spacing:-.25px">2600.00</div>
<div class="a" style="left:385px;top:840px;width:820px;height:28px;background:#bfe4fe"></div>
<div class="hl" style="left:385px;top:840px;width:821px"></div>
<div class="vl" style="left:385px;top:840px;height:29px"></div>
<div class="vl" style="left:1205px;top:840px;height:29px"></div>
<div class="c" style="left:386.5px;width:630px;top:846.5px;line-height:18px;font-weight:bold">合计</div>
<div class="a" style="left:1016px;top:368px;width:189px;height:1px;background:#fff"></div>
<div class="a" style="left:1016px;top:505px;width:189px;height:1px;background:#fff"></div>
<div class="a" style="left:1016px;top:560px;width:189px;height:1px;background:#fff"></div>
<div class="a" style="left:1016px;top:785px;width:189px;height:1px;background:#fff"></div>
<div class="a" style="left:200px;top:850px;width:1008px;height:21px;background:#fff"></div>
<div class="a" style="left:205px;top:850px;width:1003px;height:17px;background:#f1f1f1"></div>
<svg class="a" style="left:209px;top:853px" width="8" height="11" viewBox="0 0 8 11"><path d="M6 1.5 L2 5.5 L6 9.5Z" fill="#a3a3a3"/></svg>
<svg class="a" style="left:1196px;top:853px" width="8" height="11" viewBox="0 0 8 11"><path d="M2 1.5 L6 5.5 L2 9.5Z" fill="#a3a3a3"/></svg>
<div class="a" style="left:1208px;top:850px;width:17px;height:17px;background:#dcdcdc"></div>
<div class="a" style="left:1208px;top:178px;width:17px;height:80px;background:#f1f1f1"></div>
<svg class="a" style="left:1208px;top:181px" width="17" height="10" viewBox="0 0 17 10"><path d="M4.5 7.5 L8.5 3.5 L12.5 7.5Z" fill="#a3a3a3"/></svg>
<svg class="a" style="left:1208px;top:243px" width="17" height="10" viewBox="0 0 17 10"><path d="M4.5 2.5 L8.5 6.5 L12.5 2.5Z" fill="#a3a3a3"/></svg>
<div class="a" style="left:1208px;top:258px;width:17px;height:592px;background:#f1f1f1"></div>
<svg class="a" style="left:1208px;top:261px" width="17" height="10" viewBox="0 0 17 10"><path d="M4.5 7.5 L8.5 3.5 L12.5 7.5Z" fill="#a3a3a3"/></svg>
<div class="a" style="left:1210px;top:274px;width:13px;height:460px;background:#c1c1c1"></div>
<svg class="a" style="left:1208px;top:836.5px" width="17" height="10" viewBox="0 0 17 10"><path d="M4.5 2.5 L8.5 6.5 L12.5 2.5Z" fill="#505050"/></svg>
<div class="a" style="left:200px;top:50px;width:1720px;height:4px;background:linear-gradient(rgba(0,0,0,.06),rgba(0,0,0,0))"></div>
<div class="a" style="left:1225px;top:178px;width:695px;height:693px;background:#fff"></div>
<div class="a" style="left:1528px;top:194px;font-size:20.5px;line-height:24px;color:#3a3a3a;white-space:nowrap">人员统计</div>
<div class="a" style="left:1885px;top:193px;width:16px;height:2px;background:#999"></div>
<div class="a" style="left:1885px;top:198px;width:16px;height:2px;background:#999"></div>
<div class="a" style="left:1885px;top:203px;width:16px;height:2px;background:#999"></div>
<svg class="a" style="left:1225px;top:178px" width="695" height="693" viewBox="1225 178 695 693"><defs><linearGradient id="g0" x1="0" y1="0" x2="0" y2="1"><stop offset="0" stop-color="#72c3fb"/><stop offset="1" stop-color="#5aa9e6"/></linearGradient><linearGradient id="g1" x1="0" y1="0" x2="0" y2="1"><stop offset="0" stop-color="#86eea0"/><stop offset="1" stop-color="#6cd38a"/></linearGradient><linearGradient id="g2" x1="0" y1="0" x2="0" y2="1"><stop offset="0" stop-color="#ffdb94"/><stop offset="1" stop-color="#f5c77a"/></linearGradient><linearGradient id="g3" x1="0" y1="0" x2="0" y2="1"><stop offset="0" stop-color="#ffa49b"/><stop offset="1" stop-color="#f78d84"/></linearGradient><linearGradient id="g4" x1="0" y1="0" x2="0" y2="1"><stop offset="0" stop-color="#8aebe0"/><stop offset="1" stop-color="#71d1c6"/></linearGradient><linearGradient id="g5" x1="0" y1="0" x2="0" y2="1"><stop offset="0" stop-color="#a7a8c2"/><stop offset="1" stop-color="#8e8fa8"/></linearGradient><linearGradient id="g6" x1="0" y1="0" x2="0" y2="1"><stop offset="0" stop-color="#8eaefa"/><stop offset="1" stop-color="#7595df"/></linearGradient><linearGradient id="g7" x1="0" y1="0" x2="0" y2="1"><stop offset="0" stop-color="#fbb774"/><stop offset="1" stop-color="#eca25e"/></linearGradient></defs><line x1="1279" y1="677.5" x2="1830" y2="677.5" stroke="#ccc" stroke-width="1"/><line x1="1279" y1="527.5" x2="1830" y2="527.5" stroke="#ccc" stroke-width="1"/><line x1="1279" y1="377.5" x2="1830" y2="377.5" stroke="#ccc" stroke-width="1"/><line x1="1279" y1="227.5" x2="1830" y2="227.5" stroke="#ccc" stroke-width="1"/><text x="1275" y="832.5" text-anchor="end" font-family="Liberation Sans" font-size="16" fill="#666" letter-spacing=".6">0</text><text x="1275" y="682.5" text-anchor="end" font-family="Liberation Sans" font-size="16" fill="#666" letter-spacing=".6">2000</text><text x="1275" y="532.5" text-anchor="end" font-family="Liberation Sans" font-size="16" fill="#666" letter-spacing=".6">4000</text><text x="1275" y="382.5" text-anchor="end" font-family="Liberation Sans" font-size="16" fill="#666" letter-spacing=".6">6000</text><text x="1275" y="232.5" text-anchor="end" font-family="Liberation Sans" font-size="16" fill="#666" letter-spacing=".6">8000</text><rect x="1291.6" y="240.7" width="8.5" height="586.3" fill="url(#g0)" stroke="#fff" stroke-width="1" stroke-opacity=".9"/><rect x="1346.6" y="590.0" width="8.5" height="237.0" fill="url(#g5)" stroke="#fff" stroke-width="1" stroke-opacity=".9"/><rect x="1412.8" y="692.0" width="8.5" height="135.0" fill="url(#g1)" stroke="#fff" stroke-width="1" stroke-opacity=".9"/><rect x="1423.8" y="693.5" width="8.5" height="133.5" fill="url(#g2)" stroke="#fff" stroke-width="1" stroke-opacity=".9"/><rect x="1434.8" y="695.0" width="8.5" height="132.0" fill="url(#g3)" stroke="#fff" stroke-width="1" stroke-opacity=".9"/><rect x="1556.0" y="632.0" width="8.5" height="195.0" fill="url(#g4)" stroke="#fff" stroke-width="1" stroke-opacity=".9"/><rect x="1688.2" y="797.0" width="8.5" height="30.0" fill="url(#g6)" stroke="#fff" stroke-width="1" stroke-opacity=".9"/><rect x="1699.2" y="782.0" width="8.5" height="45.0" fill="url(#g7)" stroke="#fff" stroke-width="1" stroke-opacity=".9"/><rect x="1732.4" y="812.0" width="8.5" height="15.0" fill="url(#g0)" stroke="#fff" stroke-width="1" stroke-opacity=".9"/><line x1="1279" y1="827.5" x2="1831" y2="827.5" stroke="#bbb" stroke-width="1"/><line x1="1279.5" y1="827" x2="1279.5" y2="832" stroke="#bbb" stroke-width="1"/><line x1="1389.7" y1="827" x2="1389.7" y2="832" stroke="#bbb" stroke-width="1"/><line x1="1499.9" y1="827" x2="1499.9" y2="832" stroke="#bbb" stroke-width="1"/><line x1="1610.1" y1="827" x2="1610.1" y2="832" stroke="#bbb" stroke-width="1"/><line x1="1720.3" y1="827" x2="1720.3" y2="832" stroke="#bbb" stroke-width="1"/><line x1="1830.5" y1="827" x2="1830.5" y2="832" stroke="#bbb" stroke-width="1"/><text x="1334.1" y="848" text-anchor="middle" font-family="Liberation Sans" font-size="15" fill="#666">办公室</text><text x="1444.3" y="848" text-anchor="middle" font-family="Liberation Sans" font-size="15" fill="#666">实施二部</text><text x="1554.5" y="848" text-anchor="middle" font-family="Liberation Sans" font-size="15" fill="#666">物流部</text><text x="1664.7" y="848" text-anchor="middle" font-family="Liberation Sans" font-size="15" fill="#666">销售部</text><text x="1774.9" y="848" text-anchor="middle" font-family="Liberation Sans" font-size="15" fill="#666">信息部</text></svg>
<div class="lg" style="top:454px;background:#5aa9e6"></div>
<div class="lt" style="top:452px">管理员</div>
<div class="lg" style="top:478px;background:#6cd38a"></div>
<div class="lt" style="top:476px">扬帆</div>
<div class="lg" style="top:502px;background:#f5c77a"></div>
<div class="lt" style="top:500px">肖鹏飞</div>
<div class="lg" style="top:526px;background:#f78d84"></div>
<div class="lt" style="top:524px">田宇</div>
<div class="lg" style="top:550px;background:#71d1c6"></div>
<div class="lt" style="top:548px">陈小小</div>
<div class="lg" style="top:574px;background:#8e8fa8"></div>
<div class="lt" style="top:572px">刘晓宇</div>
<div class="lg" style="top:598px;background:#7595df"></div>
<div class="lt" style="top:596px">于学军</div>
<div class="lg" style="top:622px;background:#eca25e"></div>
<div class="lt" style="top:620px">王伟</div>
</body></html>
